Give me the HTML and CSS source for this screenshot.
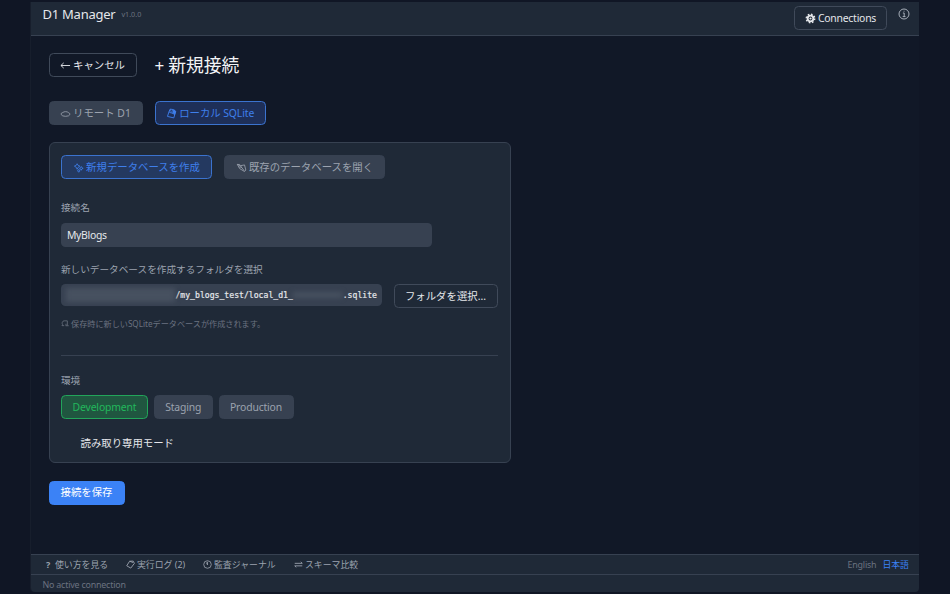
FILE: index.html
```html
<!DOCTYPE html>
<html lang="ja">
<head>
  <meta charset="UTF-8" />
  <title>D1 Manager</title>
  <link rel="stylesheet" href="styles.css">
</head>
<body>
  <div class="app">
    <header class="header">
      <div class="brand">
        <span class="brand-name">D1 Manager</span>
        <span class="version">v1.0.0</span>
      </div>
      <div class="header-actions">
        <button class="btn btn-connections">
          <svg class="icon" viewBox="0 0 12 12">
            <circle cx="6" cy="6" r="3.1" fill="none" stroke="currentColor" stroke-width="2" />
            <circle cx="6" cy="6" r="4.6" fill="none" stroke="currentColor" stroke-width="1.6" stroke-dasharray="1.8 1.81" />
            <circle cx="6" cy="6" r="1.2" fill="currentColor" />
          </svg>
          <span>Connections</span>
        </button>
        <svg class="info" viewBox="0 0 12 12" fill="none" stroke="currentColor" stroke-width=".9">
          <circle cx="6" cy="6" r="5" />
          <path d="M4.9 5h1.3v3.5M4.7 8.6h2.8M5.6 3.2h.9" />
        </svg>
      </div>
    </header>

    <main class="main">
      <div class="title-row">
        <button class="btn btn-cancel">
          <svg class="icon arrow" viewBox="0 0 12 12" fill="none" stroke="currentColor">
            <path d="M11 6H1M4 3.2L1 6l3 2.8" />
          </svg>
          <span>キャンセル</span>
        </button>
        <h1><span class="plus">+</span>新規接続</h1>
      </div>

      <div class="tabs">
        <button class="btn btn-muted tab-remote">
          <svg class="icon" viewBox="0 0 12 12" fill="none" stroke="currentColor" stroke-width=".9">
            <path d="M3 8.6L1.3 7.2V5.9L3.1 4.9C4.3 3.7 8 3.7 9 4.9L10.7 6.1V7.3L9.2 8.6Q6 9.6 3 8.6Z" />
          </svg>
          <span>リモート D1</span>
        </button>
        <button class="btn btn-active tab-local">
          <svg class="icon" viewBox="0 0 12 12" fill="none" stroke="currentColor">
            <path d="M3.4 3.6L1.6 9.2l6.9 1.6 2.2-7.2-2.3-1.8-3.8-.6-1.2 2.4Z" />
            <path d="M4.9 1.4L4 4.9l3.6.9 1-3.8" />
            <path d="M7 2.2L6.3 4.9M8.7 2.2l1.7 1.6-1.2 3.6-1.6-1.6Z" fill="currentColor" />
          </svg>
          <span>ローカル SQLite</span>
        </button>
      </div>

      <section class="card">
        <div class="tabs">
          <button class="btn btn-active mode-create">
            <svg class="icon" viewBox="0 0 12 12" fill="none" stroke="currentColor" stroke-width=".9">
              <path d="M4.5 1.9l1 1.8 2 .8-1.8 1.2-1.2 2.2-1-2.2-2-1.2 2-.8Z" />
              <path d="M9 4.9l.6 1.3 1.5.7-1.5.7L9 9l-.6-1.4-1.4-.7 1.4-.7ZM6.3 8l.5 1 1 .6-1 .6-.5 1-.5-1-1-.6 1-.6Z" />
            </svg>
            <span>新規データベースを作成</span>
          </button>
          <button class="btn btn-muted mode-open">
            <svg class="icon" viewBox="0 0 12 12" fill="none" stroke="currentColor" stroke-width=".9">
              <path d="M1.4 2.6l2.6.2 1.2 1.2L9.3 3.2l1.4 5.6-1.4 1.6L4 7.2Z" />
              <path d="M1.4 2.6l3.4 1.6 4.2 5.4M3.4 5.4l3 .4" />
            </svg>
            <span>既存のデータベースを開く</span>
          </button>
        </div>

        <div class="label name-label">接続名</div>
        <div class="input name-input"><span>MyBlogs</span></div>

        <div class="label folder-label">新しいデータベースを作成するフォルダを選択</div>
        <div class="folder-row">
          <div class="input path-input">
            <span class="redacted redacted-home"></span>
            <span>/my_blogs_test/local_d1_</span>
            <span class="redacted redacted-stamp"></span>
            <span>.sqlite</span>
          </div>
          <button class="btn btn-folder">フォルダを選択...</button>
        </div>
        <div class="hint">
          <svg viewBox="0 0 10 10" fill="none" stroke="currentColor">
            <path d="M4 8.3H1.2L2 7C.8 5.4 1.6 2.3 3.9 2.3h4V8M5.8 8.4h3.8M6.2 6v2.2" />
          </svg>
          <span>保存時に新しいSQLiteデータベースが作成されます。</span>
        </div>

        <div class="divider"></div>

        <div class="label env-label">環境</div>
        <div class="env-row">
          <button class="btn env-dev">Development</button>
          <button class="btn btn-muted env-staging">Staging</button>
          <button class="btn btn-muted env-prod">Production</button>
        </div>
        <label class="readonly">読み取り専用モード</label>
      </section>

      <button class="btn btn-save">接続を保存</button>
    </main>

    <footer class="footer">
      <div class="toolbar">
        <a class="tool tool-help"><b>?</b><span>使い方を見る</span></a>
        <a class="tool tool-log">
          <svg viewBox="0 0 10 10" fill="none" stroke="currentColor">
            <path d="M4 1.4L8 1.2l1.3 2.6L5.3 9 .8 6.4Z" />
            <path d="M4.2 1.4l3.6 1.4" />
          </svg>
          <span>実行ログ (2)</span>
        </a>
        <a class="tool tool-audit">
          <svg viewBox="0 0 10 10" fill="none" stroke="currentColor" stroke-width=".9">
            <circle cx="5" cy="5" r="4.2" />
            <path d="M5 2v3.5M3.8 2.8L5 5.5" />
          </svg>
          <span>監査ジャーナル</span>
        </a>
        <a class="tool tool-schema">
          <svg viewBox="0 0 10 10" fill="none" stroke="currentColor">
            <path d="M.8 3.7h8.4L7.5 2.1M9.2 6.5H.8l1.7 1.6" />
          </svg>
          <span>スキーマ比較</span>
        </a>
        <div class="langs">
          <a class="lang lang-en">English</a>
          <a class="lang lang-active">日本語</a>
        </div>
      </div>
      <div class="status">No active connection</div>
    </footer>
  </div>
</body>
</html>
```
FILE: styles.css
```css
* {
  box-sizing: border-box;
}

body {
  margin: 0;
  height: 594px;
  padding: 2px 31px;
  overflow: hidden;
  background: #101625;
  color: #e5e7eb;
  font-family: "Noto Sans", "Noto Sans CJK JP", sans-serif;
  font-size: 10.4px;
}

.app {
  width: 888px;
  height: 590px;
  display: flex;
  flex-direction: column;
  background: #111827;
  box-shadow: -1px 0 0 #171e2c;
  border-radius: 0 0 4px 4px;
  overflow: hidden;
}

.header {
  height: 34px;
  flex: none;
  display: flex;
  justify-content: space-between;
  padding: 0 9px 0 11.5px;
  background: #1f2937;
  border-bottom: 1px solid #374151;
}

.brand {
  display: flex;
  align-items: center;
  height: 23px;
  gap: 6px;
}

.brand-name {
  font-size: 13px;
  letter-spacing: -0.25px;
}

.version {
  font-size: 7.2px;
  color: #6b7280;
}

.header-actions {
  display: flex;
  align-items: flex-start;
  padding-top: 4px;
  gap: 11px;
}

.info {
  width: 12px;
  height: 12px;
  margin-top: 2px;
  color: #b6bcc6;
}

.btn {
  height: 24px;
  padding: 0;
  display: flex;
  align-items: center;
  justify-content: center;
  gap: 2px;
  border: 1px solid #404a5a;
  border-radius: 4.5px;
  background: transparent;
  color: #e5e7eb;
  font-family: inherit;
  font-size: 10.4px;
  line-height: 15px;
  white-space: nowrap;
}

.icon {
  width: 11px;
  height: 11px;
  flex: none;
}

.btn-connections {
  width: 93px;
  letter-spacing: -0.22px;
}

.main {
  flex: 1;
  padding: 17px 17.5px 0;
}

.title-row {
  display: flex;
  align-items: center;
  height: 24px;
  gap: 18px;
}

.btn-cancel {
  width: 88px;
}

h1 {
  margin: 0;
  display: flex;
  align-items: center;
  gap: 4px;
  height: 24px;
  font-size: 17.8px;
  font-weight: 400;
  line-height: 24px;
  color: #f3f4f6;
}

.plus {
  font-size: 17px;
  padding-top: 2px;
}

.tabs {
  display: flex;
  gap: 12px;
}

.title-row + .tabs {
  margin-top: 24px;
}

.btn-muted {
  background: #374151;
  border-color: #374151;
  color: #9ca3af;
}

.btn-active {
  background: #1e2f58;
  border-color: #3b73cf;
  color: #3f7fec;
}

.tab-remote {
  width: 94px;
}

.tab-local {
  width: 111.5px;
  letter-spacing: -0.08px;
}

.card {
  width: 462px;
  height: 321px;
  margin-top: 17px;
  padding: 12px 12px 12px 11.5px;
  background: #1f2937;
  border: 1px solid #374151;
  border-radius: 6px;
}

.card .btn-active {
  background: #243960;
}

.mode-create {
  width: 151px;
}

.mode-open {
  width: 161px;
}

.label {
  height: 14px;
  font-size: 9.65px;
  line-height: 14px;
  color: #9ca3af;
}

.name-label {
  margin-top: 22px;
}

.input {
  display: flex;
  align-items: center;
  padding: 0 6px;
  background: #374151;
  border-radius: 4.5px;
}

.name-input {
  width: 371px;
  height: 24px;
  margin-top: 8px;
  padding-bottom: 1px;
  letter-spacing: -0.3px;
}

.folder-label {
  margin-top: 16px;
}

.folder-row {
  display: flex;
  justify-content: space-between;
  align-items: flex-start;
  margin-top: 7px;
}

.path-input {
  width: 321px;
  height: 22px;
  padding: 0 5px;
  justify-content: space-between;
  font-family: "DejaVu Sans Mono", monospace;
  font-size: 8.15px;
  -webkit-text-stroke: 0.2px currentColor;
}

.redacted {
  background: #475160;
  filter: blur(2.5px);
}

.redacted-home {
  width: 109px;
  height: 14px;
}

.redacted-stamp {
  width: 49px;
  height: 6px;
}

.btn-folder {
  width: 104px;
}

.hint {
  display: flex;
  align-items: center;
  gap: 2px;
  height: 12px;
  margin-top: 9px;
  font-size: 8.15px;
  color: #6b7280;
}

.hint svg {
  width: 8px;
  height: 8px;
}

.divider {
  height: 1px;
  margin-top: 26px;
  background: #374151;
}

.env-label {
  margin-top: 18px;
}

.env-row {
  display: flex;
  gap: 6px;
  margin-top: 7px;
}

.env-dev {
  width: 87px;
  background: #205640;
  border-color: #22a55a;
  color: #22b85c;
  letter-spacing: -0.15px;
}

.env-staging {
  width: 58.5px;
  letter-spacing: -0.15px;
}

.env-prod {
  width: 75px;
  letter-spacing: -0.15px;
}

.readonly {
  display: block;
  height: 16px;
  line-height: 16px;
  margin: 16px 0 0 19.5px;
}

.btn-save {
  width: 76px;
  margin-top: 17.5px;
  background: #3b82f6;
  border-color: #3b82f6;
  color: #fff;
}

.footer {
  flex: none;
  height: 38px;
  background: #1f2937;
  font-size: 8.9px;
  color: #9ca3af;
}

.toolbar {
  display: flex;
  align-items: center;
  height: 21px;
  padding: 0 10px 1px 12px;
  border-top: 1px solid #374151;
  border-bottom: 1px solid #374151;
}

.tool {
  display: flex;
  align-items: center;
  gap: 2px;
  white-space: nowrap;
}

.tool svg {
  width: 9px;
  height: 9px;
}

.tool-help {
  width: 83px;
}

.tool-help b {
  width: 10px;
  text-align: center;
}

.tool-log {
  width: 77px;
}

.tool-audit {
  width: 91px;
}

.langs {
  margin-left: auto;
  display: flex;
  gap: 6px;
}

.lang {
  color: #6b7280;
}

.lang-en {
  letter-spacing: -0.2px;
}

.lang-active {
  color: #3b82f6;
}

.status {
  height: 17px;
  padding-left: 11.5px;
  line-height: 19px;
  letter-spacing: -0.2px;
  color: #6b7280;
}
```
